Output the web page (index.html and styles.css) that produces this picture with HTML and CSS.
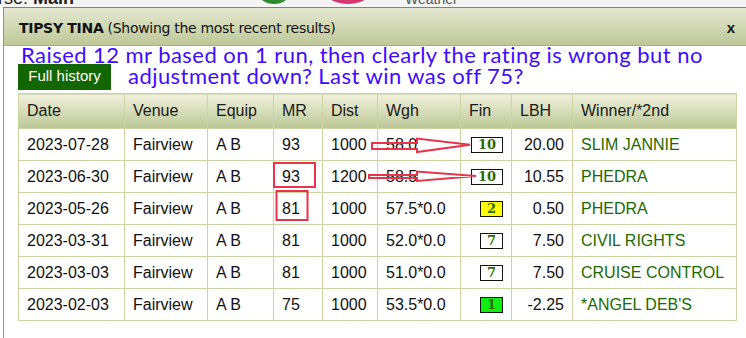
FILE: index.html
```html
<!DOCTYPE html>
<html>
<head>
<meta charset="utf-8">
<link rel="stylesheet" href="styles.css">
</head>
<body>
<div class="page">
  <div class="bgstrip">
    <span class="bg-course">rse: <b>Main</b></span>
    <span class="bg-icon green"></span>
    <span class="bg-icon pink"></span>
    <span class="bg-weather">Weather</span>
  </div>
  <div class="dialog">
    <div class="titlebar">
      <span class="title"><b>TIPSY TINA</b> (Showing the most recent results)</span>
      <span class="close">x</span>
    </div>
    <div class="content">
      <div class="note1">Raised 12 mr based on 1 run, then clearly the rating is wrong but no</div>
      <div class="row2">
        <span class="btn">Full history</span>
        <span class="note2">adjustment down? Last win was off 75?</span>
      </div>
      <div class="tablewrap">
        <table class="results">
          <colgroup>
            <col class="c-date"><col class="c-venue"><col class="c-equip"><col class="c-mr"><col class="c-dist"><col class="c-wgh"><col class="c-fin"><col class="c-lbh"><col class="c-win">
          </colgroup>
          <thead>
            <tr><th>Date</th><th>Venue</th><th>Equip</th><th>MR</th><th>Dist</th><th>Wgh</th><th>Fin</th><th>LBH</th><th>Winner/*2nd</th></tr>
          </thead>
          <tbody>
            <tr><td>2023-07-28</td><td>Fairview</td><td>A B</td><td>93</td><td>1000</td><td>58.0</td><td class="fin"><span class="pos">10</span></td><td class="lbh">20.00</td><td class="win">SLIM JANNIE</td></tr>
            <tr><td>2023-06-30</td><td>Fairview</td><td>A B</td><td>93</td><td>1200</td><td>58.5</td><td class="fin"><span class="pos">10</span></td><td class="lbh">10.55</td><td class="win">PHEDRA</td></tr>
            <tr><td>2023-05-26</td><td>Fairview</td><td>A B</td><td>81</td><td>1000</td><td>57.5*0.0</td><td class="fin"><span class="pos yellow">2</span></td><td class="lbh">0.50</td><td class="win">PHEDRA</td></tr>
            <tr><td>2023-03-31</td><td>Fairview</td><td>A B</td><td>81</td><td>1000</td><td>52.0*0.0</td><td class="fin"><span class="pos">7</span></td><td class="lbh">7.50</td><td class="win">CIVIL RIGHTS</td></tr>
            <tr><td>2023-03-03</td><td>Fairview</td><td>A B</td><td>81</td><td>1000</td><td>51.0*0.0</td><td class="fin"><span class="pos">7</span></td><td class="lbh">7.50</td><td class="win">CRUISE CONTROL</td></tr>
            <tr><td>2023-02-03</td><td>Fairview</td><td>A B</td><td>75</td><td>1000</td><td>53.5*0.0</td><td class="fin"><span class="pos green">1</span></td><td class="lbh">-2.25</td><td class="win">*ANGEL DEB'S</td></tr>
          </tbody>
        </table>
        <svg class="annot" width="718" height="226" viewBox="0 0 718 226">
          <g fill="none" stroke="#e8334a" stroke-width="2">
            <rect x="256" y="70" width="41" height="24"/>
            <rect x="258.5" y="98" width="31" height="29"/>
            <polygon points="354,50 399,50 399,45.5 452,51.7 399,59 399,56 354,56"/>
            <polygon points="351,82 399,82 399,78.5 458,83 399,88 399,85 351,85"/>
          </g>
        </svg>
      </div>
    </div>
  </div>
</div>
</body>
</html>
```

FILE: styles.css
```css
html, body {
  margin: 0;
  padding: 0;
  background: #ffffff;
  overflow: hidden;
}
.page {
  width: 746px;
  height: 338px;
  overflow: hidden;
  font-family: "Liberation Sans", Arial, sans-serif;
}
.bgstrip {
  height: 7px;
  position: relative;
  overflow: hidden;
  background: #f4f4f4;
}
.bg-course {
  position: absolute;
  left: -2px;
  top: -12px;
  font-size: 18px;
  color: #222;
}
.bg-icon {
  position: absolute;
  top: -20px;
  height: 24px;
  border-radius: 50%;
}
.bg-icon.green { left: 258px; background: #2f8a2f; width: 32px; }
.bg-icon.pink { left: 326px; background: #d4386e; width: 44px; }
.bg-weather {
  position: absolute;
  left: 405px;
  top: -9px;
  font-size: 14px;
  color: #555;
}
.dialog {
  margin-left: 3px;
  height: 331px;
  border-left: 1px solid #8f9c6a;
  border-top: 1px solid #7d8b55;
  background: #ffffff;
  box-sizing: border-box;
}
.titlebar {
  height: 37px;
  background: linear-gradient(#e4e8d0, #bec898);
  border-bottom: 1px solid #a6b07f;
  display: flex;
  align-items: center;
  justify-content: space-between;
  padding: 0 11px 0 15px;
}
.title {
  font-family: "DejaVu Sans", Verdana, sans-serif;
  font-size: 14px;
  color: #111;
  letter-spacing: -0.3px;
  padding-top: 2px;
}
.close {
  font-weight: bold;
  font-size: 15px;
  color: #111;
  padding-top: 1px;
}
.content {
  padding-left: 14px;
}
.note1, .note2 {
  font-family: Lato, "Open Sans", sans-serif;
  font-size: 22px;
  letter-spacing: 0.45px;
  color: #3d0cff;
  white-space: nowrap;
}
.note1 {
  padding-left: 3px;
  height: 18px;
  line-height: 17px;
}
.row2 {
  display: flex;
  align-items: flex-start;
  height: 29px;
}
.btn {
  background: #136700;
  color: #ffffff;
  font-size: 15px;
  height: 26px;
  line-height: 24px;
  width: 93px;
  text-align: center;
  box-sizing: border-box;
}
.note2 {
  margin-left: 17px;
  line-height: 24px;
}
.tablewrap {
  position: relative;
  width: 718px;
}
.results {
  border-collapse: collapse;
  border: 1px solid #a7b36f;
  font-size: 16px;
  color: #111;
  table-layout: fixed;
  width: 718px;
}
.results th, .results td {
  border: 1px solid #ccd4a2;
  padding: 0 8px;
  text-align: left;
  white-space: nowrap;
  overflow: hidden;
}
.results th {
  height: 34px;
  font-weight: normal;
  background: linear-gradient(#f0f2dc, #bcc696);
  color: #1a1a1a;
}
.results td { height: 31px; }
.c-date { width: 106px; }
.c-venue { width: 83px; }
.c-equip { width: 66px; }
.c-mr { width: 49px; }
.c-dist { width: 55px; }
.c-wgh { width: 83px; }
.c-fin { width: 51px; }
.c-lbh { width: 61px; }
.c-win { width: 164px; }
.results td.fin { text-align: right; }
.results td.lbh { text-align: right; }
.results td.win { color: #1c6a00; }
.pos {
  display: inline-block;
  border: 1px solid #111;
  font-family: "DejaVu Serif", Georgia, serif;
  font-weight: bold;
  font-size: 13px;
  color: #2c6a00;
  min-width: 9px;
  height: 14px;
  line-height: 14px;
  padding: 0 6px;
  text-align: center;
  vertical-align: middle;
  background: #ffffff;
}
.pos.yellow { background: #ffff00; }
.pos.green { background: #11ee11; }
.annot {
  position: absolute;
  left: 0;
  top: 0;
  pointer-events: none;
}
```
